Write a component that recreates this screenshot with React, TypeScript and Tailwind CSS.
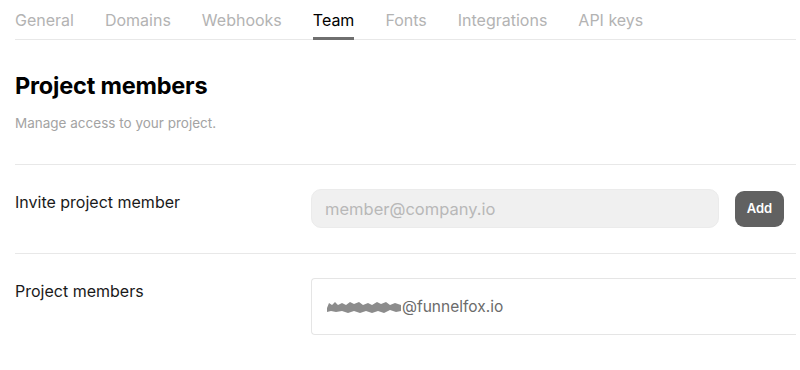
const tabs = ["General", "Domains", "Webhooks", "Team", "Fonts", "Integrations", "API keys"];

export default function App() {
  const active = "Team";

  return (
    <div className="w-[800px] h-[370px] overflow-hidden bg-white pl-[15px] pr-[4px] font-['Inter',sans-serif]">
      {/* --------------------- Tabs --------------------- */}
      <nav className="flex gap-[31px] border-b border-[#e8e8e8]">
        {tabs.map((tab) => (
          <div
            key={tab}
            className={`-mb-px pt-[10px] pb-[7px] text-[16px] leading-5 border-b-[3px] ${
              tab === active ? "text-black border-[#6f6f6f]" : "text-[#b3b3b3] border-transparent"
            }`}
          >
            {tab}
          </div>
        ))}
      </nav>

      {/* --------------------- Header --------------------- */}
      <div className="pt-[32px] pb-[33px] border-b border-[#e8e8e8]">
        <h1 className="text-[23.5px] leading-7 font-bold text-black tracking-[-0.2px]">Project members</h1>
        <p className="mt-[15px] text-[13.5px] leading-4 text-[#a3a3a3]">Manage access to your project.</p>
      </div>

      {/* --------------------- Invite --------------------- */}
      <div className="flex pt-[24px] pb-[25px] border-b border-[#e8e8e8]">
        <div className="w-[296px] pt-[3px] text-[16px] leading-5 text-[#1a1a1a]">Invite project member</div>
        <div className="flex items-center gap-4">
          <input
            placeholder="member@company.io"
            className="w-[408px] h-[39px] rounded-[10px] bg-[#f0f0f0] border border-[#ebebeb] pl-[13px] text-[16.5px] text-[#333] placeholder:text-[#b8b8b8] outline-none"
          />
          <button className="w-[49px] h-[36px] rounded-[9px] bg-[#616161] text-white text-[13px] font-semibold">Add</button>
        </div>
      </div>

      {/* --------------------- Members --------------------- */}
      <div className="flex pt-[24px]">
        <div className="w-[296px] pt-[3px] text-[16px] leading-5 text-[#1a1a1a]">Project members</div>
        <div className="flex-1 h-[57px] flex items-center pl-[14px] border border-r-0 border-[#e5e5e5] rounded-l-[4px]">
          {/* blurred name */}
          <svg width="76" height="16" viewBox="0 0 76 16" className="mt-[1px]">
            <path
              d="M1 9 L3 4 L6 6 L9 3 L12 6 L16 4 L20 6 L24 3 L28 5 L33 3 L37 6 L42 4 L46 6 L51 3 L55 5 L60 3 L64 6 L69 4 L75 6 L75 12 L70 13 L64 11 L58 14 L52 12 L46 14 L40 12 L34 14 L28 12 L22 14 L16 12 L10 13 L5 12 L1 13 Z"
              fill="#8c8c8c"
              style={{ filter: "blur(0.6px)" }}
            />
          </svg>
          <span className="text-[15.5px] text-[#6b6b6b]">@funnelfox.io</span>
        </div>
      </div>
    </div>
  );
}
